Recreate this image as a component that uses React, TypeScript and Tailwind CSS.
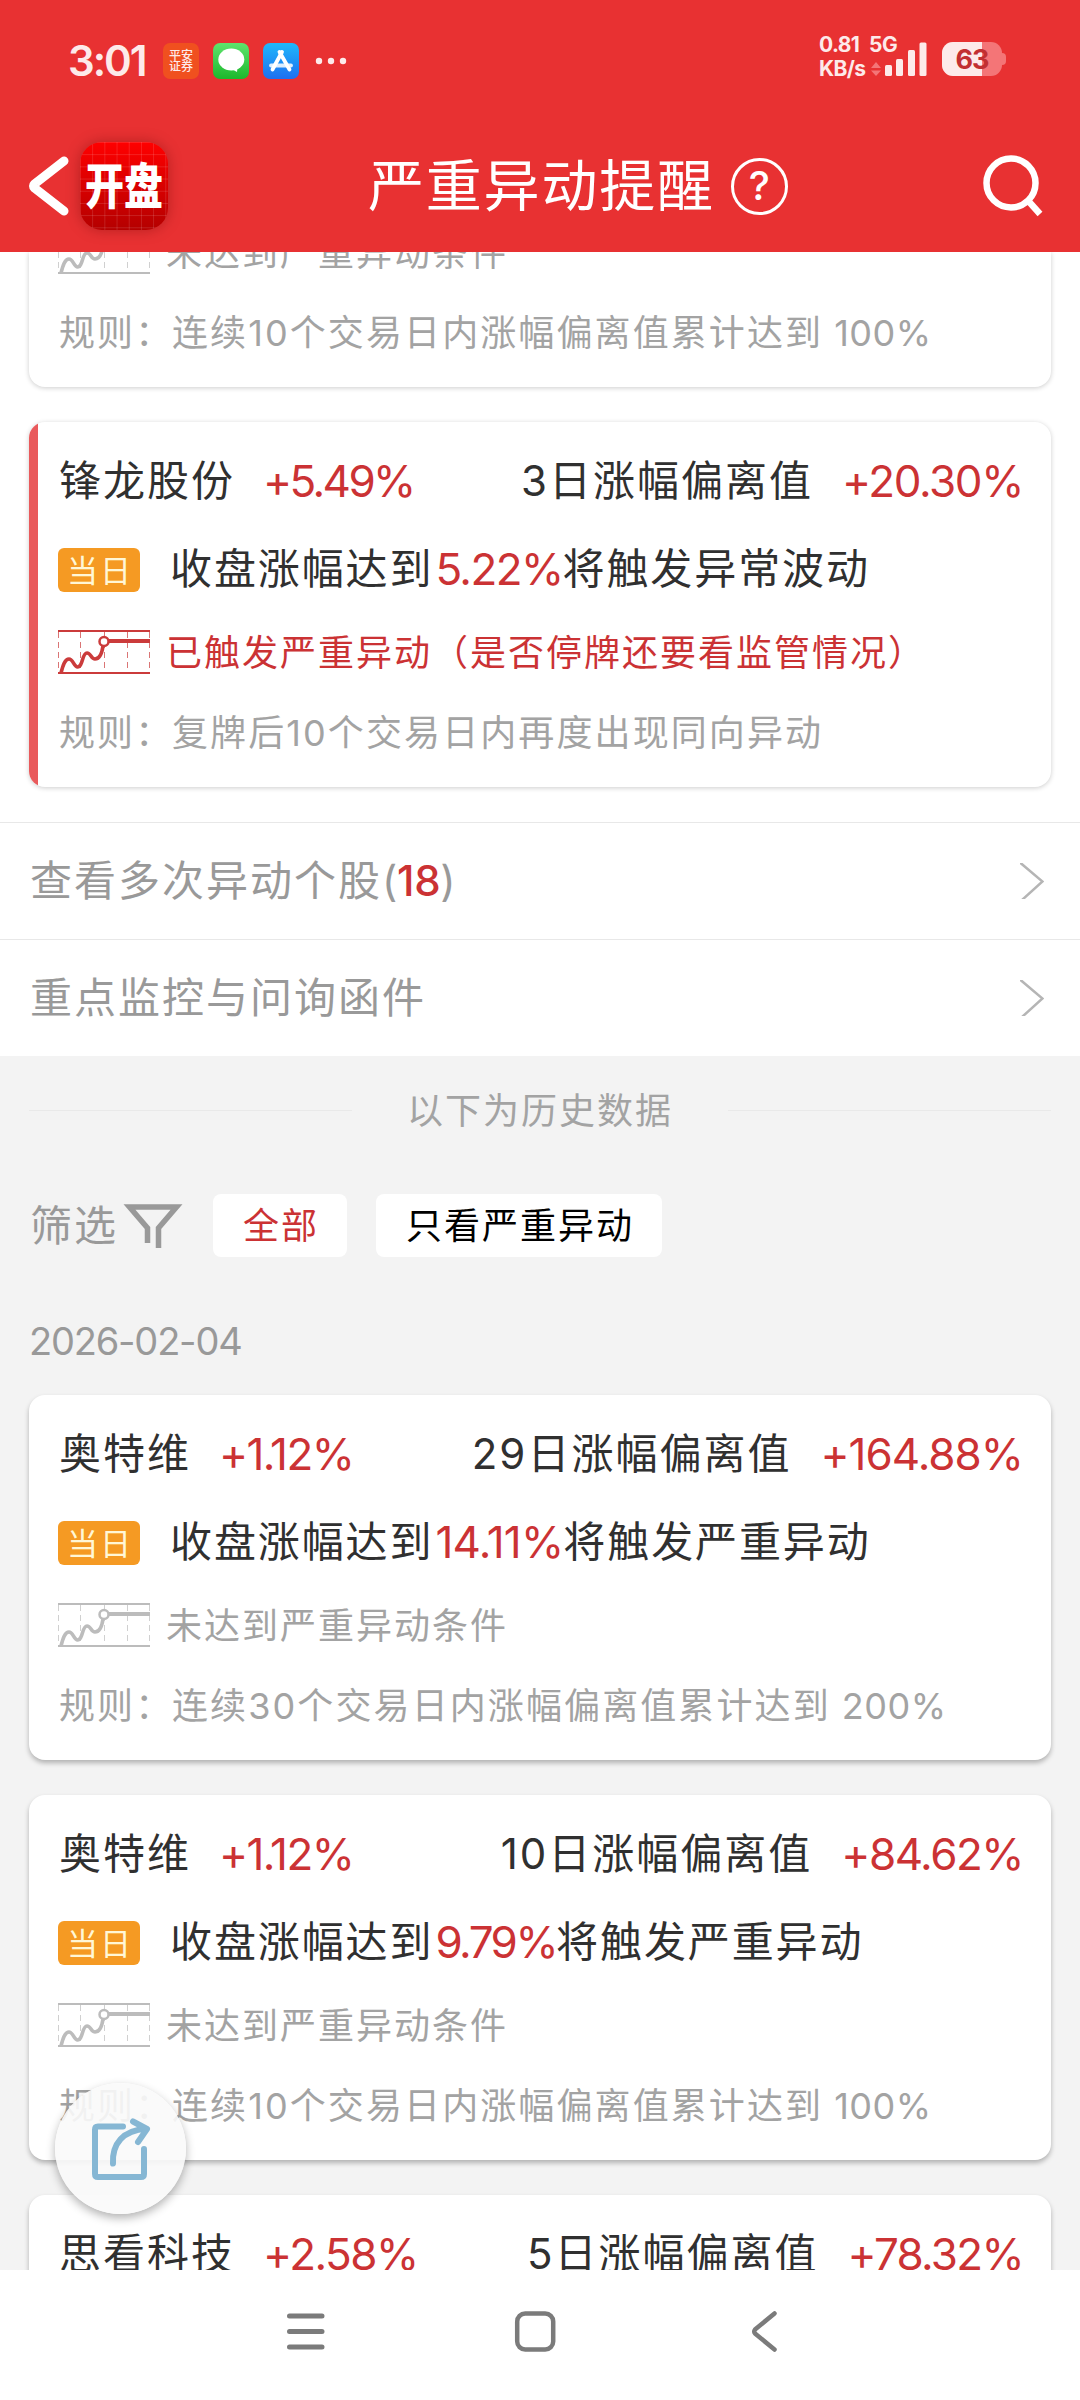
import React, { useState } from 'react';
import clsx from 'clsx';

interface Figure {
  value: string;
  tracking: string;
}

interface Alert {
  id: number;
  name: string;
  change: Figure;
  days: string;
  deviation: Figure;
  target: Figure;
  result: string;
  triggered: boolean;
  status: string;
  rule: string;
  limit?: string;
}

const todayAlert: Alert = {
  id: 1,
  name: '锋龙股份',
  change: { value: '+5.49%', tracking: 'tracking-[-2.6px]' },
  days: '3',
  deviation: { value: '+20.30%', tracking: 'tracking-[-1.4px]' },
  target: { value: '5.22%', tracking: 'tracking-[-1.6px]' },
  result: '将触发异常波动',
  triggered: true,
  status: '已触发严重异动（是否停牌还要看监管情况）',
  rule: '复牌后10个交易日内再度出现同向异动'
};

const historyAlerts: Alert[] = [
  {
    id: 2,
    name: '奥特维',
    change: { value: '+1.12%', tracking: 'tracking-[-1.6px]' },
    days: '29',
    deviation: { value: '+164.88%', tracking: 'tracking-[-1px]' },
    target: { value: '14.11%', tracking: 'tracking-[-0.8px]' },
    result: '将触发严重异动',
    triggered: false,
    status: '未达到严重异动条件',
    rule: '连续30个交易日内涨幅偏离值累计达到',
    limit: '200%'
  },
  {
    id: 3,
    name: '奥特维',
    change: { value: '+1.12%', tracking: 'tracking-[-1.6px]' },
    days: '10',
    deviation: { value: '+84.62%', tracking: 'tracking-[-1.5px]' },
    target: { value: '9.79%', tracking: 'tracking-[-2.5px]' },
    result: '将触发严重异动',
    triggered: false,
    status: '未达到严重异动条件',
    rule: '连续10个交易日内涨幅偏离值累计达到',
    limit: '100%'
  }
];

const Num: React.FC<{ figure: Figure }> = ({ figure }) => (
  <span className={clsx('text-[44px] text-[#cb3234]', figure.tracking)}>{figure.value}</span>
);

// Small trend chart in front of the status text
const TrendIcon: React.FC<{ active?: boolean }> = ({ active }) => (
  <svg
    className={clsx('h-11 w-[92px] shrink-0', active ? 'text-[#cb3b3b]' : 'text-[#bcbcbc]')}
    viewBox="0 0 92 44"
    fill="none"
    stroke="currentColor"
  >
    <path d="M0 1H92M0 43H92" strokeWidth="2" />
    <path
      d="M.5 2V42M22.5 2V42M46.5 2V42M69.5 2V42M91.5 2V42"
      strokeWidth="1"
      strokeDasharray="6 4"
      opacity="0.7"
    />
    <path
      d="M3 43C5 35 7 29 11 29C15 29 16 37 19.5 37C25 37 24 23 29 23C33 23 33 29 37 29C42 29 44 23 45 16"
      strokeWidth="3.6"
    />
    <path d="M51 11H92" strokeWidth="4" />
    <circle cx="46" cy="11.5" r="4.5" strokeWidth="2.5" fill="white" />
  </svg>
);

const StatusRow: React.FC<{ text: string; triggered: boolean }> = ({ text, triggered }) => (
  <div className="flex h-[66px] shrink-0 items-center gap-4">
    <TrendIcon active={triggered} />
    <span
      className={clsx(
        'pt-[2px] text-[36px] leading-none tracking-[2px]',
        triggered ? 'text-[#cb3234]' : 'text-[#a3a3a3]'
      )}
    >
      {text}
    </span>
  </div>
);

const RuleRow: React.FC<{ text: string; limit?: string }> = ({ text, limit }) => (
  <div className="flex h-24 shrink-0 items-center text-[36px] leading-none tracking-[2.1px] whitespace-nowrap text-[#a3a3a3]">
    <span className="w-[114px] shrink-0 pl-px">规则：</span>
    <span>{text}</span>
    {limit && <span className="ml-[11px] tracking-[0.5px]">{limit}</span>}
  </div>
);

const TitleRow: React.FC<Pick<Alert, 'name' | 'change' | 'days' | 'deviation'>> = ({
  name,
  change,
  days,
  deviation
}) => (
  <div className="flex h-20 shrink-0 items-center justify-between text-[42px] leading-none tracking-[2px] text-[#303030]">
    <div className="flex items-center gap-7 pl-px">
      <span>{name}</span>
      <Num figure={change} />
    </div>
    <div className="flex items-center gap-[29px]">
      <span>{days}日涨幅偏离值</span>
      <Num figure={deviation} />
    </div>
  </div>
);

const AlertCard: React.FC<{ alert: Alert; raised?: boolean }> = ({ alert, raised }) => (
  <div
    className={clsx(
      'flex h-[365px] overflow-hidden rounded-2xl bg-white',
      raised ? 'shadow-[0_3px_5px_rgba(0,0,0,0.27)]' : 'shadow-[0_1px_5px_rgba(0,0,0,0.2)]'
    )}
  >
    <div className={clsx('w-[9px] shrink-0', alert.triggered && 'bg-[#e95a5c]')} />
    <div className="flex flex-1 flex-col pt-[19px] pr-[28px] pl-5">
      <TitleRow {...alert} />
      <div className="flex h-[98px] items-center gap-[30px]">
        <span className="flex h-11 w-[82px] items-center justify-center rounded-md bg-[#f59a23] pl-[2px] text-[31px] leading-none tracking-[2px] text-[#fff7d6]">
          当日
        </span>
        <span className="flex items-center pb-[2px] text-[42px] leading-none tracking-[1.9px] text-[#303030]">
          收盘涨幅达到
          <span className="pl-[2px]">
            <Num figure={alert.target} />
          </span>
          {alert.result}
        </span>
      </div>
      <StatusRow text={alert.status} triggered={alert.triggered} />
      <RuleRow text={alert.rule} limit={alert.limit} />
    </div>
  </div>
);

const StatusBar: React.FC = () => (
  <div className="flex h-[122px] items-center justify-between pr-[74px] pl-[68px] text-[#fdeaea]">
    <div className="flex items-center gap-[14px]">
      <span className="w-[81px] text-[42px] leading-none font-semibold tracking-[-2px]">3:01</span>
      <div className="flex size-9 flex-col items-center justify-center rounded-[7px] bg-[#f0501f] text-[12px] leading-[11.5px] font-medium">
        <span>平安</span>
        <span>证券</span>
      </div>
      <svg className="size-9" viewBox="0 0 36 36">
        <defs>
          <linearGradient id="msg" x1="0" y1="0" x2="0" y2="1">
            <stop offset="0" stopColor="#5fe46d" />
            <stop offset="1" stopColor="#1cb82c" />
          </linearGradient>
        </defs>
        <rect width="36" height="36" rx="7" fill="url(#msg)" />
        <ellipse cx="18.3" cy="16.5" rx="13" ry="11" fill="white" />
        <path d="M18 26C21 27 22 28 24 29L24.5 24Z" fill="white" />
      </svg>
      <svg className="size-9" viewBox="0 0 36 36">
        <defs>
          <linearGradient id="store" x1="0" y1="0" x2="0" y2="1">
            <stop offset="0" stopColor="#1fb8fb" />
            <stop offset="1" stopColor="#1d6ff0" />
          </linearGradient>
        </defs>
        <rect width="36" height="36" rx="7" fill="url(#store)" />
        <g fill="none" stroke="white" strokeWidth="3.8" strokeLinecap="round">
          <path d="M16.5 9L26.5 26.5" />
          <path d="M19 9L9.5 26.5" />
          <path d="M8 22.5H28" opacity="0.85" />
        </g>
      </svg>
      <svg className="ml-0.5 h-2 w-8" viewBox="0 0 32 8" fill="currentColor">
        <circle cx="4" cy="4" r="3.2" />
        <circle cx="16" cy="4" r="3.2" />
        <circle cx="28" cy="4" r="3.2" />
      </svg>
    </div>
    <div className="flex h-10 items-end">
      <div className="w-[50px] text-[21px] leading-6 font-bold tracking-[-0.6px] whitespace-nowrap">
        <div>0.81</div>
        <div>KB/s</div>
      </div>
      <div className="h-12 w-[58px] text-[21px] leading-6 font-bold tracking-[-0.5px]">5G</div>
      {/* Signal bars overlap the network label's column */}
      <svg className="mb-[5px] -ml-[56px] h-[34px] w-[58px]" viewBox="0 0 58 34" fill="currentColor">
        <path d="M0 26L5 20L10 26ZM0 28.5L5 34L10 28.5Z" fill="#f47577" />
        <rect x="14" y="23" width="7" height="11" rx="1.5" />
        <rect x="25" y="17" width="7" height="17" rx="1.5" />
        <rect x="37" y="8" width="7" height="26" rx="1.5" />
        <rect x="48.5" y="0.5" width="7" height="33.5" rx="1.5" />
      </svg>
      <svg className="mb-[5px] ml-[13px] h-[34px] w-16" viewBox="0 0 64 34">
        <clipPath id="battery">
          <rect width="60" height="34" rx="11" />
        </clipPath>
        <rect x="50" y="11" width="14" height="12" rx="4" fill="#f47577" />
        <g clipPath="url(#battery)">
          <rect width="60" height="34" fill="#f47577" />
          <rect width="40" height="34" fill="#fdeaea" />
        </g>
        <text
          x="30"
          y="27"
          textAnchor="middle"
          fontSize="27"
          fontWeight="700"
          letterSpacing="-1"
          fill="#c22f31"
        >
          63
        </text>
      </svg>
    </div>
  </div>
);

const Header: React.FC = () => (
  <div className="flex h-[130px] items-center pr-[36px] pb-[2px] pl-[28px] text-white">
    <svg className="h-[60px] w-[42px]" viewBox="0 0 42 60" fill="none" stroke="currentColor">
      <path d="M36 5L6.5 28Q4.5 30 6.5 32L36 55" strokeWidth="9" strokeLinecap="round" strokeLinejoin="round" />
    </svg>
    <div className="ml-[10px] flex size-[88px] items-center justify-center rounded-[22px] bg-linear-to-b from-[#ff0000] to-[#b40000] shadow-[0_0_14px_rgba(90,0,0,0.35)]">
      <div className="flex size-full items-center justify-center rounded-[22px] bg-[linear-gradient(90deg,rgba(255,255,255,0.13)_1px,transparent_1px),linear-gradient(rgba(255,255,255,0.13)_1px,transparent_1px)] bg-size-[12.2px_12.2px]">
        <span className="scale-y-[1.24] text-[39px] leading-none font-black">开盘</span>
      </div>
    </div>
    <div className="ml-[200px] flex items-center gap-[16px]">
      <span className="text-[56px] leading-none tracking-[1.8px]">严重异动提醒</span>
      <span className="flex size-[57px] items-center justify-center rounded-full border-3 border-white text-[40px] leading-none font-medium">
        ?
      </span>
    </div>
    <svg className="ml-auto h-[64px] w-[62px]" viewBox="0 0 62 64" fill="none" stroke="currentColor">
      <circle cx="29" cy="29" r="24.5" strokeWidth="6.5" />
      <path d="M45.500 46L58 60" strokeWidth="6.5" />
    </svg>
  </div>
);

const LinkRow: React.FC<{ children: React.ReactNode }> = ({ children }) => (
  <div className="flex h-[117px] items-center justify-between border-t border-[#e8e8e8] pr-[36px] pl-[30px] text-[42px] leading-none tracking-[2px] text-[#999999]">
    <span>{children}</span>
    <svg className="h-9 w-6" viewBox="0 0 24 36" fill="none" stroke="#b5b5b5" strokeWidth="2.5">
      <path d="M0 -0.5L22.5 18.5L2 37" />
    </svg>
  </div>
);

const filters = ['全部', '只看严重异动'];

const FilterBar: React.FC = () => {
  const [selected, setSelected] = useState(filters[0]);

  return (
    <div className="flex h-[123px] items-center">
      <span className="w-[94px] pl-px text-[42px] leading-none tracking-[2px] text-[#999999]">筛选</span>
      <svg className="h-11 w-[60px]" viewBox="0 0 60 44" fill="none" stroke="#999999" strokeWidth="5.5">
        <path d="M24.5 39V24L6.5 3H53.5L35.5 24V44" />
      </svg>
      <div className="ml-[30px] flex gap-[29px]">
        {filters.map(filter => (
          <button
            key={filter}
            className={clsx(
              'h-[63px] rounded-lg bg-white pr-[28px] pl-[30px] text-[36px] leading-none tracking-[2px]',
              filter === selected ? 'text-[#cb3234]' : 'text-black'
            )}
            onClick={() => setSelected(filter)}
          >
            {filter}
          </button>
        ))}
      </div>
    </div>
  );
};

const NavBar: React.FC = () => (
  <div className="flex h-[130px] shrink-0 justify-center gap-[187px] bg-white pt-10 pr-[10px]">
    <svg className="size-[42px]" viewBox="0 0 42 42" stroke="#7b7b7b" strokeWidth="5" strokeLinecap="round">
      <path d="M4.5 6H37M4.5 21.5H37M4.5 37H37" />
    </svg>
    <svg className="size-[42px]" viewBox="0 0 42 42" fill="none" stroke="#7b7b7b" strokeWidth="4.5">
      <rect x="3.2" y="3.5" width="36" height="36" rx="8" />
    </svg>
    <svg
      className="size-[42px]"
      viewBox="0 0 42 42"
      fill="none"
      stroke="#7b7b7b"
      strokeWidth="4.5"
      strokeLinecap="round"
      strokeLinejoin="round"
    >
      <path d="M31.5 3.5L12 19.5Q10.5 21.5 12 23.5L31.5 39.5" />
    </svg>
  </div>
);

const App: React.FC = () => {
  return (
    <div className="relative flex h-[2400px] w-[1080px] flex-col overflow-hidden bg-[#f3f3f3] font-['Inter','Noto_Sans_CJK_SC',sans-serif]">
      <div className="h-[252px] shrink-0 bg-[#e83132]">
        <StatusBar />
        <Header />
      </div>

      <div className="min-h-0 flex-1 overflow-hidden">
        <div className="bg-white">
          <div className="px-[29px] pb-[35px]">
            {/* Card scrolled under the header */}
            <div className="flex h-[135px] flex-col justify-end rounded-b-2xl bg-white px-[29px] pb-[6px] shadow-[0_1px_5px_rgba(0,0,0,0.2)]">
              <StatusRow text="未达到严重异动条件" triggered={false} />
              <RuleRow text="连续10个交易日内涨幅偏离值累计达到" limit="100%" />
            </div>
            <div className="mt-[35px]">
              <AlertCard alert={todayAlert} />
            </div>
          </div>
          <LinkRow>
            查看多次异动个股
            <span className="tracking-[-0.3px]">
              (<span className="font-medium text-[#cb3234]">18</span>)
            </span>
          </LinkRow>
          <LinkRow>重点监控与问询函件</LinkRow>
        </div>

        <div className="px-[29px]">
          <div className="flex h-[108px] items-center justify-between">
            <div className="h-px w-[323px] bg-[#e9e9e9]" />
            <span className="pt-px text-[36px] leading-none tracking-[2px] text-[#a3a3a3]">以下为历史数据</span>
            <div className="h-px w-[323px] bg-[#e9e9e9]" />
          </div>
          <FilterBar />
          <div className="flex h-[108px] items-center text-[38px] leading-none tracking-[-1.2px] text-[#999999]">
            2026-02-04
          </div>
          <div className="flex flex-col gap-[35px]">
            {historyAlerts.map(alert => (
              <AlertCard key={alert.id} alert={alert} raised />
            ))}
            <div className="h-[90px] rounded-t-2xl bg-white pt-[19px] pr-[28px] pl-[29px] shadow-[0_3px_5px_rgba(0,0,0,0.27)]">
              <TitleRow
                name="思看科技"
                change={{ value: '+2.58%', tracking: 'tracking-[-1.5px]' }}
                days="5"
                deviation={{ value: '+78.32%', tracking: 'tracking-[-1.7px]' }}
              />
            </div>
          </div>
        </div>
      </div>

      <NavBar />

      {/* Floating share button */}
      <button className="absolute top-[2083px] left-[55px] flex size-[131px] items-center justify-center rounded-full bg-[#fafafa]/90 shadow-[0_4px_10px_rgba(0,0,0,0.3)]">
        <svg
          className="h-[64px] w-[60px]"
          viewBox="0 0 60 64"
          fill="none"
          stroke="#86b7d4"
          strokeWidth="6"
          strokeLinecap="round"
          strokeLinejoin="round"
        >
          <path d="M32 9.5H7Q4 9.5 4 12.5V57Q4 60 7 60H50Q53 60 53 57V32" />
          <path d="M22 46.5C21 27 32 13 55 12" />
          <path d="M42 4.5L56 12L47 25" />
        </svg>
      </button>
    </div>
  );
};

export default App;
